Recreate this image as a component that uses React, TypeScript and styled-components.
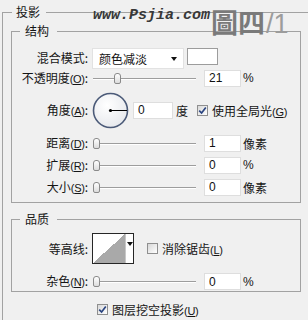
import React from "react";
import styled, { createGlobalStyle } from "styled-components";

const GlobalStyle = createGlobalStyle`
  html, body {
    margin: 0;
    padding: 0;
    background: #f0f0f0;
  }
  body {
    font-family: "Noto Sans CJK SC", "Liberation Sans", sans-serif;
    font-size: 12px;
    color: #151515;
  }
`;

type SliderRow = {
  label: string;
  key: string;
  value: number;
  max: number;
  unit: string;
  h: number;
};

const distanceRows: SliderRow[] = [
  { label: "距离", key: "D", value: 1, max: 250, unit: "像素", h: 20 },
  { label: "扩展", key: "R", value: 0, max: 100, unit: "%", h: 24 },
  { label: "大小", key: "S", value: 0, max: 250, unit: "像素", h: 20 },
];

const Hotkey = ({ k }: { k: string }) => (
  <Mnemonic>
    (<u>{k}</u>)
  </Mnemonic>
);

const Slider = ({ value, max }: { value: number; max: number }) => (
  <Track>
    <Thumb style={{ left: Math.round((value / max) * 100) + 1 }} />
  </Track>
);

const Check = ({ checked, label, k }: { checked: boolean; label: string; k: string }) => (
  <CheckLabel>
    <CheckBox>
      {checked && (
        <svg width="9" height="9" viewBox="0 0 9 9">
          <path d="M1.2 4.6 L3.6 7 L7.8 1.6" fill="none" stroke="#2a4480" strokeWidth="1.7" />
        </svg>
      )}
    </CheckBox>
    <span>
      {label}
      <Hotkey k={k} />
    </span>
  </CheckLabel>
);

const AngleDial = () => (
  <svg width="37" height="37" viewBox="0 0 37 37">
    <defs>
      <radialGradient id="dialFill" cx="40%" cy="35%" r="70%">
        <stop offset="0%" stopColor="#ffffff" />
        <stop offset="100%" stopColor="#e6e8ec" />
      </radialGradient>
    </defs>
    <circle cx="18.5" cy="18.5" r="17" fill="url(#dialFill)" stroke="#4b5a78" strokeWidth="1.6" />
    <circle cx="18.5" cy="18.5" r="1.6" fill="#000" />
    <line x1="18.5" y1="18.5" x2="35" y2="18.5" stroke="#000" strokeWidth="1" />
  </svg>
);

export default function App() {
  return (
    <Screen>
      <GlobalStyle />
      <Group $w={340} $outer>
        <Legend $ml={1} $pr={6} $pl={4}>投影</Legend>

        <Group $w={290} $pt={8} $pb={5}>
          <Legend $ml={8}>结构</Legend>

          <Row $h={22}>
            <Label>混合模式:</Label>
            <Wide>
              <Select>
                颜色减淡
                <Caret />
              </Select>
              <Swatch />
            </Wide>
          </Row>

          <Row $h={18}>
            <Label>
              不透明度
              <Hotkey k="O" />:
            </Label>
            <Slider value={21} max={100} />
            <NumInput readOnly value="21" />
            <Unit>%</Unit>
          </Row>

          <Row $h={46}>
            <Label>
              角度
              <Hotkey k="A" />:
            </Label>
            <Wide>
              <AngleDial />
              <NumInput readOnly value="0" $w={40} $ml={4} />
              <Unit $ml={3}>度</Unit>
              <Spacer $w={9} />
              <Check checked label="使用全局光" k="G" />
            </Wide>
          </Row>

          {distanceRows.map((r) => (
            <Row $h={r.h} key={r.key}>
              <Label>
                {r.label}
                <Hotkey k={r.key} />:
              </Label>
              <Slider value={r.value} max={r.max} />
              <NumInput readOnly value={String(r.value)} />
              <Unit>{r.unit}</Unit>
            </Row>
          ))}
        </Group>

        <Group $w={290} $mt={8} $pt={6} $pb={1}>
          <Legend $ml={8}>品质</Legend>

          <Row $h={31}>
            <Label>等高线:</Label>
            <Wide>
              <Contour>
                <ContourPreview />
                <ContourArrow>
                  <Caret />
                </ContourArrow>
              </Contour>
              <Spacer $w={13} />
              <Check checked={false} label="消除锯齿" k="L" />
            </Wide>
          </Row>

          <Row $h={17} $mt={9}>
            <Label>
              杂色
              <Hotkey k="N" />:
            </Label>
            <Slider value={0} max={100} />
            <NumInput readOnly value="0" />
            <Unit>%</Unit>
          </Row>
        </Group>

        <Footer>
          <Check checked label="图层挖空投影" k="U" />
        </Footer>
      </Group>

      <SiteMark>www.Psjia.com</SiteMark>
      <FigureMark>
        圖四<Fraction>/1</Fraction>
      </FigureMark>
    </Screen>
  );
}

const Screen = styled.div`
  position: relative;
  width: 308px;
  height: 320px;
  overflow: hidden;
  background: #f0f0f0;
`;

const Group = styled.fieldset<{ $w: number; $outer?: boolean; $mt?: number; $pt?: number; $pb?: number }>`
  box-sizing: border-box;
  min-width: 0;
  width: ${(p) => p.$w}px;
  margin: ${(p) => (p.$outer ? "4px 0 0 2px" : `${p.$mt ?? 0}px 0 0 0`)};
  padding: ${(p) => (p.$outer ? "3px 0 0 8px" : `${p.$pt ?? 0}px 0 ${p.$pb ?? 0}px 0`)};
  border: 1px solid #a2a2a2;
  height: ${(p) => (p.$outer ? "400px" : "auto")};
`;

const Legend = styled.legend<{ $ml: number; $pl?: number; $pr?: number }>`
  margin-left: ${(p) => p.$ml}px;
  padding: 0 ${(p) => p.$pr ?? 8}px 0 ${(p) => p.$pl ?? 5}px;
  font-size: 12px;
  line-height: 16px;
  color: #151515;
`;

const Row = styled.div<{ $h: number; $mt?: number }>`
  display: grid;
  grid-template-columns: 76px 108px 37px auto;
  column-gap: 4px;
  align-items: center;
  height: ${(p) => p.$h}px;
  margin-top: ${(p) => p.$mt ?? 0}px;
`;

const Label = styled.div`
  text-align: right;
  white-space: nowrap;
  line-height: 16px;
`;

const Mnemonic = styled.span`
  font-family: "Liberation Sans", sans-serif;
  font-size: 11px;
  letter-spacing: -0.3px;
  u {
    text-decoration: underline;
    text-underline-offset: 1px;
  }
`;

const Wide = styled.div`
  grid-column: 2 / -1;
  display: flex;
  align-items: center;
`;

const Spacer = styled.div<{ $w: number }>`
  width: ${(p) => p.$w}px;
  flex: none;
`;

const Select = styled.div`
  box-sizing: border-box;
  position: relative;
  width: 92px;
  height: 21px;
  padding-left: 6px;
  line-height: 19px;
  background: #fff;
  border: 1px solid #e2e2e2;
  color: #111;
  > span {
    right: 6px;
    top: 8px;
  }
`;

const Caret = styled.span`
  position: absolute;
  width: 0;
  height: 0;
  border-left: 3px solid transparent;
  border-right: 3px solid transparent;
  border-top: 4px solid #111;
`;

const Swatch = styled.div`
  box-sizing: border-box;
  width: 31px;
  height: 17px;
  margin-left: 3px;
  margin-top: -4px;
  background: #fff;
  border: 1px solid #9c9c9c;
`;

const Track = styled.div`
  position: relative;
  height: 13px;
  &::before {
    content: "";
    position: absolute;
    left: 1px;
    right: 4px;
    top: 6px;
    height: 1px;
    background: #9d9d9d;
    box-shadow: 0 1px 0 #ffffff;
  }
`;

const Thumb = styled.div`
  position: absolute;
  top: 1px;
  box-sizing: border-box;
  width: 7px;
  height: 11px;
  border: 1px solid #8a8a8a;
  border-radius: 3px 3px 2px 2px;
  background: linear-gradient(#ffffff, #dcdcdc);
`;

const NumInput = styled.input<{ $w?: number; $ml?: number }>`
  box-sizing: border-box;
  width: ${(p) => p.$w ?? 37}px;
  height: 17px;
  margin: 0 0 0 ${(p) => p.$ml ?? 0}px;
  padding: 0 0 0 4px;
  border: 1px solid #dedede;
  background: #fff;
  font-family: "Liberation Sans", sans-serif;
  font-size: 12px;
  color: #111;
  outline: none;
`;

const Unit = styled.span<{ $ml?: number }>`
  margin-left: ${(p) => p.$ml ?? -2}px;
  white-space: nowrap;
  font-family: "Liberation Sans", "Noto Sans CJK SC", sans-serif;
`;

const CheckLabel = styled.label`
  display: flex;
  align-items: center;
  gap: 4px;
  white-space: nowrap;
`;

const CheckBox = styled.span`
  box-sizing: border-box;
  display: flex;
  align-items: center;
  justify-content: center;
  width: 11px;
  height: 11px;
  border: 1px solid #8f8f8f;
  background: linear-gradient(135deg, #d8d8d8, #ffffff);
`;

const Contour = styled.div`
  display: flex;
  height: 31px;
  border: 1px solid #262626;
  box-sizing: border-box;
  width: 42px;
`;

const ContourPreview = styled.div`
  width: 32px;
  background: linear-gradient(to top left, #a9a9a9 50%, #ffffff 50%);
`;

const ContourArrow = styled.div`
  position: relative;
  flex: 1;
  background: #fff;
  border-left: 1px solid #c8c8c8;
  > span {
    left: 1px;
    top: 8px;
  }
`;

const Footer = styled.div`
  display: flex;
  height: 14px;
  margin-top: 10px;
  padding-left: 86px;
`;

const SiteMark = styled.div`
  position: absolute;
  left: 93px;
  top: 7px;
  font-family: "Liberation Mono", monospace;
  font-style: italic;
  font-weight: bold;
  font-size: 15px;
  color: #383838;
`;

const FigureMark = styled.div`
  position: absolute;
  left: 211px;
  top: 8px;
  font-family: "Noto Sans CJK TC", sans-serif;
  font-weight: bold;
  font-size: 27px;
  line-height: 27px;
  color: #7a7a7a;
  white-space: nowrap;
`;

const Fraction = styled.span`
  font-family: "Liberation Sans", sans-serif;
  font-weight: normal;
  color: #9c9c9c;
  margin-left: 1px;
`;
